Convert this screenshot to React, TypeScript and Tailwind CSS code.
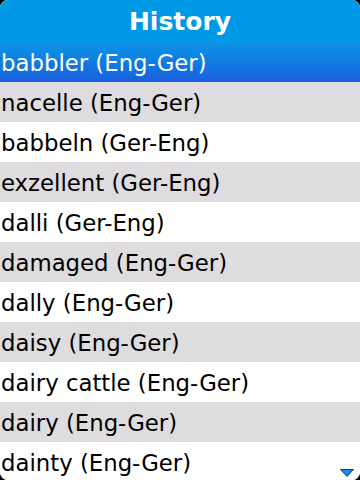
const items = [
  "babbler (Eng-Ger)",
  "nacelle (Eng-Ger)",
  "babbeln (Ger-Eng)",
  "exzellent (Ger-Eng)",
  "dalli (Ger-Eng)",
  "damaged (Eng-Ger)",
  "dally (Eng-Ger)",
  "daisy (Eng-Ger)",
  "dairy cattle (Eng-Ger)",
  "dairy (Eng-Ger)",
  "dainty (Eng-Ger)",
];

export default function App() {
  return (
    <div className="w-[360px] h-[480px] bg-black overflow-hidden">
      <div
        className="relative w-full h-full bg-white rounded-[8px] overflow-hidden"
        style={{ fontFamily: '"DejaVu Sans", Verdana, sans-serif' }}
      >
        {/* Title bar */}
        <div className="h-[42px] bg-[#0099e6] flex items-center justify-center">
          <span className="text-white font-bold text-[25px] leading-none">History</span>
        </div>

        {/* List */}
        <div className="flex flex-col">
          {items.map((t, i) => (
            <div
              key={t}
              className={
                i === 0
                  ? "h-[40px] shrink-0 flex items-center pl-[1px] pt-[2px] text-white bg-gradient-to-b from-[#0b95e6] to-[#1a5fdc]"
                  : i % 2 === 1
                  ? "h-[40px] shrink-0 flex items-center pl-[1px] pt-[2px] text-black bg-[#dedcde]"
                  : "h-[40px] shrink-0 flex items-center pl-[1px] pt-[2px] text-black bg-white"
              }
            >
              <span className="text-[22.8px] leading-none whitespace-nowrap">{t}</span>
            </div>
          ))}
        </div>

        {/* Scroll arrow */}
        <svg className="absolute right-[6px] bottom-[3px]" width="14" height="8" viewBox="0 0 14 8">
          <path d="M0.5 0.5 H13.5 L7 7.5 Z" fill="#1a8ae6" stroke="#0a3f80" strokeWidth="1" />
        </svg>
      </div>
    </div>
  );
}
